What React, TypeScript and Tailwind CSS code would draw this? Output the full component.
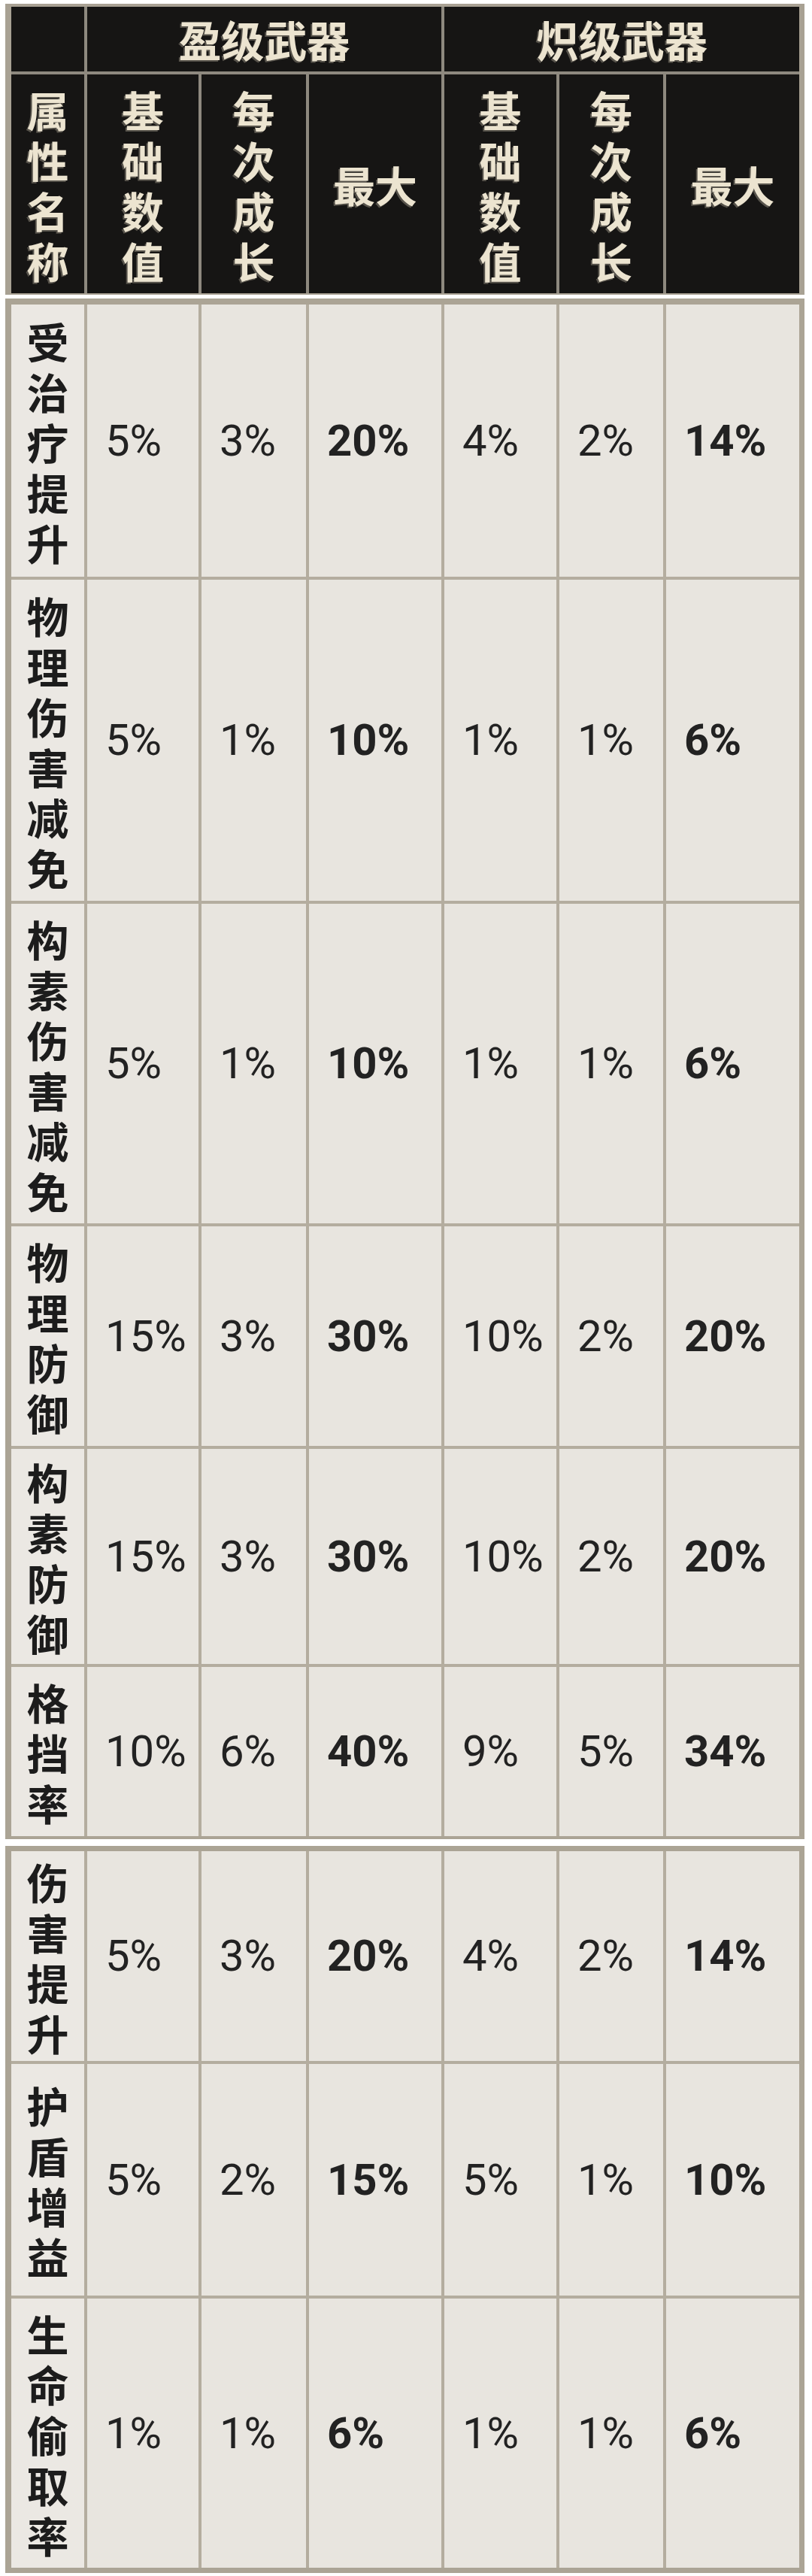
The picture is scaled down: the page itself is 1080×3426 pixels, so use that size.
const cols = "grid grid-cols-[97px_148px_139px_176px_149px_138px_177px] gap-[4px]";

type Row = { name: string; values: string[]; h: string };

const blockOne: Row[] = [
  { name: "受治疗提升", values: ["5%", "3%", "20%", "4%", "2%", "14%"], h: "h-[362px]" },
  { name: "物理伤害减免", values: ["5%", "1%", "10%", "1%", "1%", "6%"], h: "h-[427px]" },
  { name: "构素伤害减免", values: ["5%", "1%", "10%", "1%", "1%", "6%"], h: "h-[425px]" },
  { name: "物理防御", values: ["15%", "3%", "30%", "10%", "2%", "20%"], h: "h-[292px]" },
  { name: "构素防御", values: ["15%", "3%", "30%", "10%", "2%", "20%"], h: "h-[286px]" },
  { name: "格挡率", values: ["10%", "6%", "40%", "9%", "5%", "34%"], h: "h-[225px]" },
];

const blockTwo: Row[] = [
  { name: "伤害提升", values: ["5%", "3%", "20%", "4%", "2%", "14%"], h: "h-[279px]" },
  { name: "护盾增益", values: ["5%", "2%", "15%", "5%", "1%", "10%"], h: "h-[308px]" },
  { name: "生命偷取率", values: ["1%", "1%", "6%", "1%", "1%", "6%"], h: "h-[358px]" },
];

const cjk = "font-['Noto_Sans_CJK_SC','Noto_Sans',sans-serif]";
const headText =
  "text-[#ece4d0] font-bold [text-shadow:-2px_2px_0_#57534b] " + cjk;

// one char per line: box is exactly 1em wide so CJK text wraps per glyph
function Vertical({ text, className }: { text: string; className: string }) {
  return (
    <span className={"block w-[56px] break-all text-center leading-[67px] " + className}>
      {text}
    </span>
  );
}

function Block({ rows, top, bottom }: { rows: Row[]; top: string; bottom: string }) {
  return (
    <div className={"bg-[#aba495] pl-[8px] pr-[7px] " + top + " " + bottom}>
      <div className={cols + " bg-[#b4ad9f]"}>
        {rows.map((r) => (
          <div key={r.name} className="contents">
            <div className={"flex items-center justify-center bg-[#ebe8e3] " + r.h}>
              <Vertical
                text={r.name}
                className={"text-[56px] font-bold text-[#1c1c1c] " + cjk}
              />
            </div>
            {r.values.map((v, i) => (
              <div
                key={i}
                className={
                  "flex items-center bg-[#e8e5df] pl-[24px] font-['Roboto',sans-serif] text-[58px] text-[#222] " +
                  r.h +
                  (i % 3 === 2 ? " font-bold" : " font-normal")
                }
              >
                {v}
              </div>
            ))}
          </div>
        ))}
      </div>
    </div>
  );
}

export default function App() {
  return (
    <div className="min-h-[3426px] w-[1080px] bg-white pl-[7px] pt-[5px]">
      <div className="w-[1063px]">
        {/* header */}
        <div className="bg-[#a8a193] pb-[2px] pl-[8px] pr-[7px] pt-[4px]">
          <div className={cols + " bg-[#8e897f]"}>
            <div className="h-[86px] bg-[#161514]" />
            <div className={"col-span-3 flex h-[86px] items-center justify-center bg-[#161514] text-[57px] " + headText}>
              盈级武器
            </div>
            <div className={"col-span-3 flex h-[86px] items-center justify-center bg-[#161514] text-[57px] " + headText}>
              炽级武器
            </div>
            {["属性名称", "基础数值", "每次成长", "最大", "基础数值", "每次成长", "最大"].map((t, i) => (
              <div key={i} className="flex h-[291px] items-center justify-center bg-[#161514]">
                {t === "最大" ? (
                  <span className={"text-[56px] " + headText}>{t}</span>
                ) : (
                  <Vertical text={t} className={"text-[56px] " + headText} />
                )}
              </div>
            ))}
          </div>
        </div>

        <div className="h-[5px] bg-white" />
        <Block rows={blockOne} top="pt-[8px]" bottom="pb-[4px]" />
        <div className="h-[9px] bg-white" />
        <Block rows={blockTwo} top="pt-[7px]" bottom="pb-[7px]" />
      </div>
    </div>
  );
}
